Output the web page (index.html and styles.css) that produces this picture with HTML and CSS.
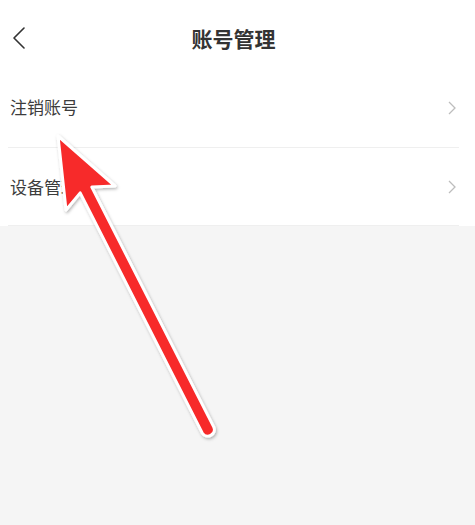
FILE: index.html
```html
<!DOCTYPE html>
<html lang="zh">
<head>
<meta charset="utf-8">
<link rel="stylesheet" href="styles.css">
</head>
<body>
<div class="page">
  <header class="topbar">
    <svg class="back" width="14" height="22" viewBox="0 0 14 22"><path d="M12 1 L2 11 L12 21" fill="none" stroke="#333" stroke-width="1.6" stroke-linecap="round" stroke-linejoin="round"/></svg>
    <h1 class="title">账号管理</h1>
  </header>
  <ul class="list">
    <li class="row">
      <span class="label">注销账号</span>
      <svg class="chev" width="8" height="14" viewBox="0 0 8 14"><path d="M1 1 L7 7 L1 13" fill="none" stroke="#bdbdbd" stroke-width="1.3"/></svg>
    </li>
    <li class="row">
      <span class="label">设备管理</span>
      <svg class="chev" width="8" height="14" viewBox="0 0 8 14"><path d="M1 1 L7 7 L1 13" fill="none" stroke="#bdbdbd" stroke-width="1.3"/></svg>
    </li>
  </ul>
  <div class="rest"></div>
  <svg class="arrow" width="475" height="525" viewBox="0 0 475 525">
    <defs>
      <filter id="sh" x="-20%" y="-20%" width="140%" height="140%">
        <feDropShadow dx="1" dy="1.5" stdDeviation="1.5" flood-color="#000" flood-opacity="0.3"/>
      </filter>
    </defs>
    <path d="M58 136 L115 186 L91.8 187.1 L213.8 427.1 A6.5 6.5 0 0 1 202.2 432.9 L80.2 192.9 L66 210 Z" fill="#f72a2b" stroke="#fff" stroke-width="3" stroke-linejoin="round" filter="url(#sh)"/>
  </svg>
</div>
</body>
</html>
```
FILE: styles.css
```css
html, body {
  margin: 0;
  padding: 0;
  background: #f5f5f5;
}
.page {
  position: relative;
  width: 475px;
  height: 525px;
  overflow: hidden;
  background: #f5f5f5;
  font-family: "Noto Sans CJK SC", "Noto Sans", sans-serif;
}
.topbar {
  height: 69px;
  background: #fff;
  display: flex;
  align-items: center;
  justify-content: center;
  position: relative;
}
.back {
  position: absolute;
  left: 12px;
  top: 27px;
}
.title {
  margin: 0 0 -6px -8px;
  font-size: 21px;
  font-weight: 700;
  color: #333;
}
.list {
  list-style: none;
  margin: 0;
  padding: 0 16px 0 8px;
  background: #fff;
}
.row {
  height: 78px;
  display: flex;
  align-items: center;
  justify-content: space-between;
  padding-left: 2px;
  border-bottom: 1px solid #efefef;
}
.row:first-child .label {
  margin-top: -3px;
}
.row:last-child {
  height: 77px;
}
.label {
  font-size: 17px;
  color: #3c3c3c;
}
.chev {
  margin-right: 3px;
}
.arrow {
  position: absolute;
  left: 0;
  top: 0;
}
```
